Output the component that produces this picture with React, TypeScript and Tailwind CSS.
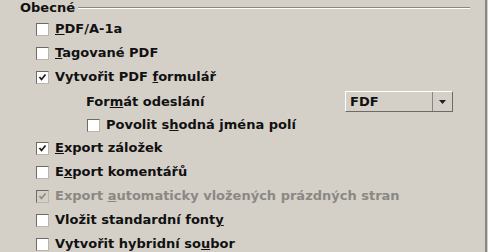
import React from 'react'

function Check({ checked = false, disabled = false }: { checked?: boolean; disabled?: boolean }) {
  return (
    <span
      className={
        'relative inline-block h-[13px] w-[13px] shrink-0 border border-t-[#6e6b66] border-l-[#6e6b66] border-r-[#b9b5ae] border-b-[#b9b5ae] ' +
        (disabled ? 'bg-[#d4d0c8]' : 'bg-white')
      }
    >
      {checked && (
        <svg className="absolute left-[1px] top-[1px]" width="9" height="9" viewBox="0 0 9 9">
          <path
            d="M1.5 4 L3.5 6.5 L7.5 1.5"
            fill="none"
            stroke={disabled ? '#8c8984' : '#1a1a1a'}
            strokeWidth="1.7"
          />
        </svg>
      )}
    </span>
  )
}

function Row({
  children,
  checked,
  disabled,
  indent = 'pl-[36px]',
  h = 'h-[24px]',
}: {
  children: React.ReactNode
  checked?: boolean
  disabled?: boolean
  indent?: string
  h?: string
}) {
  return (
    <div className={'flex items-center gap-[6px] ' + indent + ' ' + h}>
      <Check checked={checked} disabled={disabled} />
      <span className={disabled ? 'text-[#8b8883]' : 'text-[#111]'}>{children}</span>
    </div>
  )
}

export default function App() {
  return (
    <div
      className="relative h-[252px] w-[488px] overflow-hidden bg-[#d4d0c8] text-[13px] font-bold"
      style={{ fontFamily: '"DejaVu Sans", sans-serif' }}
    >
      <div className="absolute right-[1px] top-0 h-full w-[2px] bg-[#8a8782]" />
      <div className="flex h-[15px] items-center pl-[20px] pr-[18px] pt-[1px]">
        <span className="text-[#111]">Obecné</span>
        <div className="ml-[3px] flex flex-1 flex-col">
          <div className="h-px bg-[#8a8782]" />
          <div className="h-px bg-white" />
        </div>
      </div>
      <div className="flex flex-col pt-[2px]">
        <Row>
          <u>P</u>DF/A-1a
        </Row>
        <Row>
          <u>T</u>agované PDF
        </Row>
        <Row checked>
          Vytvořit PDF <u>f</u>ormulář
        </Row>
        <div className="flex h-[25px] items-center pl-[86px]">
          <span className="w-[259px] text-[#111]">
            For<u>m</u>át odeslání
          </span>
          <div className="flex h-[21px] w-[108px] items-center border border-t-white border-l-white border-r-[#6e6b66] border-b-[#6e6b66] bg-[#d4d0c8]">
            <span className="flex-1 pl-[4px] text-[#111]">FDF</span>
            <div className="flex h-full w-[20px] items-center justify-center border-l border-[#8a8782]">
              <svg width="7" height="4" viewBox="0 0 7 4">
                <path d="M0 0 H7 L3.5 4 Z" fill="#222" />
              </svg>
            </div>
          </div>
        </div>
        <Row indent="pl-[87px]" h="h-[22px]">
          Povolit s<u>h</u>odná jména polí
        </Row>
        <Row checked>
          <u>E</u>xport záložek
        </Row>
        <Row>
          E<u>x</u>port komentářů
        </Row>
        <Row checked disabled>
          Export <u>a</u>utomaticky vložených prázdných stran
        </Row>
        <Row>
          Vložit standardní font<u>y</u>
        </Row>
        <Row>
          Vytvořit hybridní so<u>u</u>bor
        </Row>
      </div>
    </div>
  )
}
